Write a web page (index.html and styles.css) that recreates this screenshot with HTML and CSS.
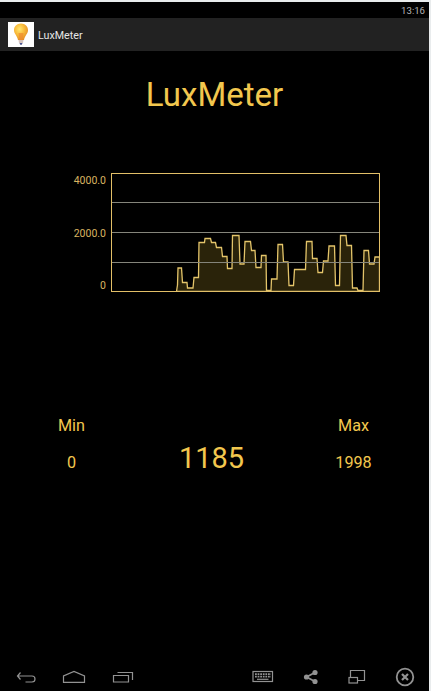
FILE: index.html
```html
<!DOCTYPE html>
<html lang="en">

<head>
  <meta charset="UTF-8">
  <meta name="viewport" content="width=device-width, initial-scale=1.0">
  <title>LuxMeter</title>
  <link rel="stylesheet" href="styles.css">
</head>

<body>
  <div class="screen">
    <div class="status-bar">13:16</div>

    <header class="action-bar">
      <svg class="app-icon" width="26" height="25" viewBox="0 0 26 25">
        <defs>
          <radialGradient id="bulb" cx="0.4" cy="0.35" r="0.65">
            <stop offset="0" stop-color="#ffe873" />
            <stop offset="0.5" stop-color="#f9bd3c" />
            <stop offset="1" stop-color="#e58f26" />
          </radialGradient>
        </defs>
        <rect width="26" height="25" fill="#fff" />
        <path d="M13 1.500C8.700 1.500 6 4.500 6 8.200c0 3.600 3.300 5.400 4 9.800h6c.7-4.400 4-6.200 4-9.800C20 4.500 17.300 1.500 13 1.500z" fill="url(#bulb)" />
        <path d="M10.500 11h5l-1 7h-3z" fill="#ee8a30" opacity="0.700" />
        <path d="M10.500 18h5l-.5 3h-4z" fill="#d5c3bd" />
        <path d="M11.500 21h3l-.7 1.700h-1.600z" fill="#4a5590" />
      </svg>
      <span>LuxMeter</span>
    </header>

    <main class="content">
      <h1 class="title">LuxMeter</h1>

      <div class="chart">
        <div class="axis">
          <span>4000.0</span>
          <span>2000.0</span>
          <span>0</span>
        </div>
        <svg class="plot" width="269" height="119" viewBox="111 173 269 119">
          <path class="area" d="M176.500 291.500L177.500 285L178 268H181.500L182.500 282.500H187L187.500 288H193L194 277.500H198.500L199 242.500H204.500L205 238.500H210.500L211.500 242.500H215.500L216.500 247.500H221.500L222.500 256.500H227L227.500 268.500H232L232.500 235.500H239L240 264H244L245 241.500H250.500L251.500 250.500H255L256 267.500H261L261.500 255.500H266L266.500 290.500H271L271.500 279H277L278 244.500H282.500L283.500 262H288L289 285.500H293.500L294.500 269.500H305.500L306.500 241.500H312L312.500 258.500H317L318 272.500H322.500L323.500 261H328L329 246H334.500L335.500 285.500H339.500L340.500 235.500H346L347 245.500H351.500L352.500 288H357L358 290.500H363L364 250.500H368.500L369.500 264H374L375 257H379.500V291.500Z" />
          <path class="grid" d="M112 202.500H379M112 232.500H379M112 262.500H379" />
          <rect class="frame" x="111.500" y="173.500" width="268" height="118" />
        </svg>
      </div>

      <div class="readings">
        <div class="reading">
          <span>Min</span>
          <span>0</span>
        </div>
        <div class="current">1185</div>
        <div class="reading">
          <span>Max</span>
          <span>1998</span>
        </div>
      </div>
    </main>

    <nav class="nav-bar">
      <div class="nav-group">
        <svg width="20" height="14" viewBox="0 0 20 14">
          <path d="M4.500 2.500L1.500 6L4.500 9.500M1.500 6H16Q19 6 19 9T16 12H9.500" />
        </svg>
        <svg width="24" height="14" viewBox="0 0 24 14">
          <path d="M1.500 12.300V6L12 1.500L22.500 6V12.300Z" />
        </svg>
        <svg width="22" height="14" viewBox="0 0 22 14">
          <path d="M1.500 5.500H16.500V12H1.500ZM5.500 2.500H20.500V10" />
        </svg>
      </div>
      <div class="nav-group tools">
        <svg width="22" height="14" viewBox="0 0 22 14">
          <rect x="1" y="1.500" width="19.500" height="10" />
          <path d="M3 4.200H19M3 6.700H19" stroke-width="1.800" stroke-dasharray="1.800 0.800" />
          <path d="M5 9.300H16.500" />
        </svg>
        <svg width="16" height="16" viewBox="0 0 16 16">
          <path d="M12 3.500L3.500 8L12 12.500" class="thick" />
          <g class="dots">
            <circle cx="12" cy="3.500" r="2.600" />
            <circle cx="3.500" cy="8" r="2.600" />
            <circle cx="12" cy="12.500" r="2.600" />
          </g>
        </svg>
        <svg width="18" height="16" viewBox="0 0 18 16">
          <path d="M2.500 8.500V1.500H16.500V11.500H10" />
          <rect x="1" y="8.500" width="8.500" height="5.500" />
        </svg>
        <svg width="20" height="20" viewBox="0 0 20 20">
          <circle cx="10" cy="10" r="8.300" class="thick" />
          <path d="M7 7L13 13M13 7L7 13" stroke-width="2.200" />
        </svg>
      </div>
    </nav>
  </div>
</body>

</html>
```

FILE: styles.css
```css
* {
  box-sizing: border-box;
}

body {
  margin: 0;
  height: 691px;
  padding: 2px 2px 0 0;
  background-color: #e9eced;
  font-family: Roboto, "Liberation Sans", sans-serif;
  overflow: hidden;
}

svg {
  display: block;
}

.screen {
  display: flex;
  flex-direction: column;
  height: 689px;
  background-color: #000;
  color: #f2c74e;
}

.status-bar {
  height: 16px;
  padding-right: 4px;
  color: #b5b5b5;
  font-size: 9.6px;
  line-height: 17px;
  text-align: right;
}

.action-bar {
  display: flex;
  align-items: center;
  gap: 4px;
  height: 33px;
  padding-left: 8px;
  background-color: #222;
  color: #e6e6e6;
  font-size: 10.7px;
}

.action-bar span {
  padding-top: 2px;
}

.content {
  flex: 1;
}

.title {
  margin: 24px 0 0;
  font-size: 33px;
  font-weight: normal;
  line-height: 40px;
  text-align: center;
}

.chart {
  display: flex;
  gap: 5px;
  margin-top: 58px;
}

.axis {
  display: flex;
  flex-direction: column;
  justify-content: space-between;
  width: 106px;
  height: 119px;
  padding: 1px 0 0;
  color: #d9b460;
  font-size: 10.5px;
  line-height: 13px;
  text-align: right;
}

.area {
  fill: #2a230a;
  stroke: #e3c46a;
  stroke-width: 1.3;
}

.grid {
  fill: none;
  stroke: #85857b;
}

.frame {
  fill: none;
  stroke: #e2bf68;
}

.readings {
  display: grid;
  grid-template-columns: 143px 137px 147px;
  margin-top: 124px;
}

.reading {
  display: flex;
  flex-direction: column;
  gap: 17px;
  font-size: 16.2px;
  line-height: 20px;
  text-align: center;
}

.current {
  padding-top: 24px;
  font-size: 29px;
  line-height: 36px;
  text-align: center;
}

.nav-bar {
  display: flex;
  justify-content: space-between;
  align-items: center;
  height: 28px;
  padding: 0 14px 0 16px;
}

.nav-group {
  display: flex;
  align-items: center;
  gap: 26px;
}

.tools {
  gap: 29px;
}

.nav-bar svg {
  fill: none;
  stroke: #929292;
  stroke-width: 1.2;
}

.nav-bar .thick {
  stroke-width: 1.8;
}

.nav-bar .dots {
  fill: #929292;
  stroke: none;
}
```
